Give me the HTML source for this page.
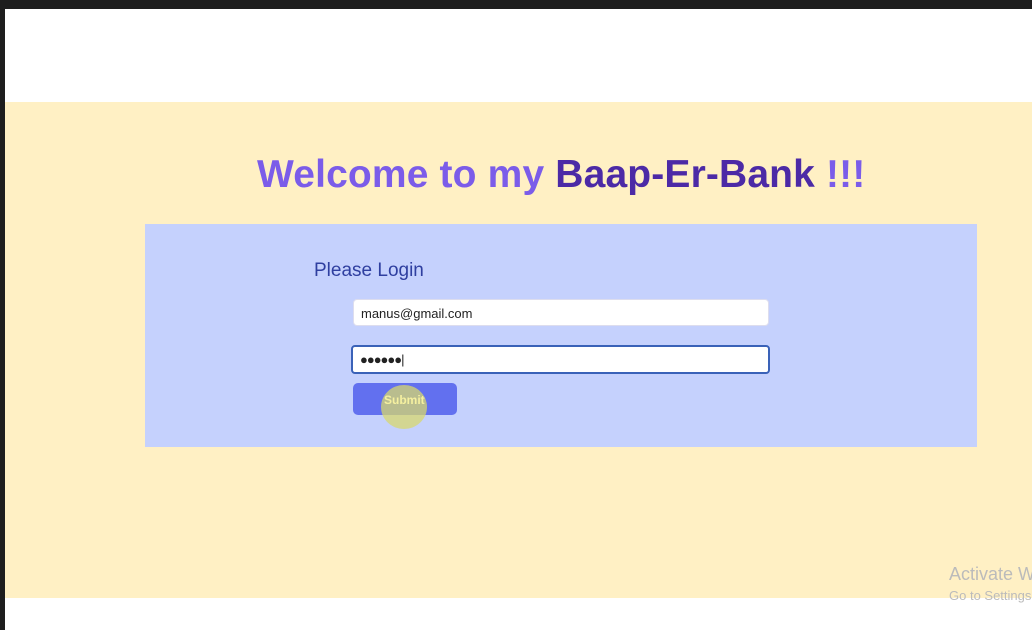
<!DOCTYPE html>
<html><head><style>
*{margin:0;padding:0;box-sizing:border-box}
body{width:1032px;height:630px;background:#1e1e1e;position:relative;overflow:hidden;font-family:"Liberation Sans","DejaVu Sans",sans-serif}
.page{position:absolute;left:5px;top:9px;width:1027px;height:621px;background:#fff}
.cream{position:absolute;left:5px;top:102px;width:1027px;height:496px;background:#fff0c4}
h1{position:absolute;left:257px;top:153px;font-size:39px;font-weight:bold;color:#7b5ce9;white-space:nowrap;letter-spacing:0.15px}
h1 b{color:#4c2aa6}
.box{position:absolute;left:145px;top:224px;width:832px;height:223px;background:#c5d1fd}
.pl{position:absolute;left:314px;top:260px;font-size:19px;color:#2f3fa0}
.in{position:absolute;left:353px;width:416px;background:#fff;border-radius:4px;font-size:13px;color:#222;padding-left:7px}
.i1{top:299px;height:27px;line-height:27px;border:1px solid #dde}
.i2{top:345px;height:29px;line-height:25px;border:2px solid #3a62b8;left:351px;width:419px;font-size:13px;letter-spacing:-1px}
.btn{position:absolute;left:353px;top:383px;width:104px;height:32px;background:#6270ef;border-radius:5px}
.hl{position:absolute;left:381px;top:385px;width:46px;height:44px;border-radius:50%;background:rgba(215,215,110,.75)}
.st{position:absolute;left:384px;top:393px;font-size:12px;font-weight:bold;color:#f5f0a0}
.clip{position:absolute;left:940px;top:555px;width:92px;height:60px;overflow:hidden}
.act{position:absolute;left:9px;top:9px;font-size:18px;color:#bbb;white-space:nowrap}
.act2{position:absolute;left:9px;top:33px;font-size:13px;color:#bbb;white-space:nowrap}
</style></head><body>
<div class="page"></div>
<div class="cream"></div>
<h1>Welcome to my <b>Baap-Er-Bank</b> !!!</h1>
<div class="box"></div>
<div class="pl">Please Login</div>
<div class="in i1">manus@gmail.com</div>
<div class="in i2">●●●●●●|</div>
<div class="btn"></div>
<div class="hl"></div>
<div class="st">Submit</div>
<div class="clip"><div class="act">Activate Windows</div><div class="act2">Go to Settings to activate</div></div>
</body></html>
